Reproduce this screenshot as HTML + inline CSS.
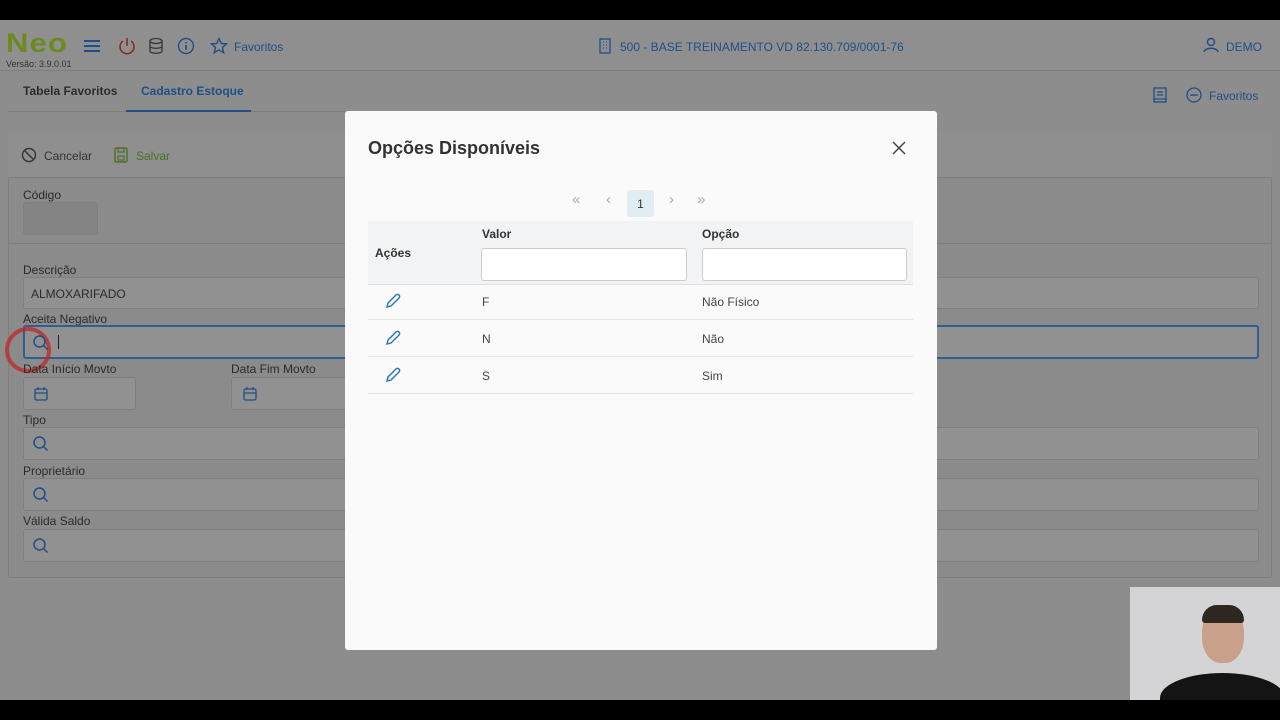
<!DOCTYPE html>
<html><head><meta charset="utf-8"><style>
*{box-sizing:border-box;margin:0;padding:0}
body{width:1280px;height:720px;overflow:hidden;background:#8d8d8d;font-family:"Liberation Sans",sans-serif;position:relative}
.a{position:absolute}
.lbl{font-size:12px;color:#2a2a2a}
.inp{position:absolute;background:#919191;border:1px solid #7f7f7f;border-radius:3px}
.blue{color:#1f4f86}
.modal{position:absolute;left:345px;top:111px;width:592px;height:539px;background:#fafafa;border-radius:3px}
.m{position:absolute}
.row{position:absolute;left:23px;width:545px;height:37px;border-bottom:1px solid #e4e4e4;font-size:12px;color:#444}
.pg{position:absolute;top:80px;font-size:15px;color:#aaa}
</style></head><body>
<div class="a" style="left:0;top:0;width:1280px;height:20px;background:#000"></div>
<div class="a" style="left:0;top:700px;width:1280px;height:20px;background:#000"></div>
<!-- header -->
<div class="a" style="left:0;top:20px;width:1280px;height:51px;background:#8f8f8f;border-bottom:1px solid #7e7e7e"></div>
<div class="a" style="left:6px;top:28px;font-size:27px;font-weight:bold;color:#6d8a1f;letter-spacing:1px;transform:scaleX(1.15);transform-origin:left">Neo</div>
<div class="a" style="left:6px;top:59px;font-size:9px;color:#333">Versão: 3.9.0.01</div>
<svg class="a" style="left:83px;top:38px" width="18" height="16"><path d="M1 3h16M1 8h16M1 13h16" stroke="#1f4f86" stroke-width="2"/></svg>
<svg class="a" style="left:118px;top:37px" width="18" height="18"><path d="M5 4a7 7 0 1 0 8 0M9 1v8" stroke="#8a2a2a" stroke-width="1.6" fill="none"/></svg>
<svg class="a" style="left:148px;top:37px" width="16" height="18"><ellipse cx="8" cy="4" rx="6" ry="2.5" stroke="#333" fill="none" stroke-width="1.3"/><path d="M2 4v10c0 3 12 3 12 0V4M2 9c0 3 12 3 12 0" stroke="#333" fill="none" stroke-width="1.3"/></svg>
<svg class="a" style="left:177px;top:37px" width="18" height="18"><circle cx="9" cy="9" r="7.5" stroke="#1f4f86" fill="none" stroke-width="1.4"/><path d="M9 8v5M9 5v1.5" stroke="#1f4f86" stroke-width="1.6"/></svg>
<svg class="a" style="left:210px;top:37px" width="18" height="18"><path d="M9 1.5l2.2 5 5.3.4-4 3.5 1.2 5.3L9 12.9l-4.7 2.8 1.2-5.3-4-3.5 5.3-.4z" stroke="#1f4f86" fill="none" stroke-width="1.4"/></svg>
<div class="a blue" style="left:234px;top:40px;font-size:12px">Favoritos</div>
<svg class="a" style="left:598px;top:38px" width="14" height="16"><rect x="2" y="1" width="10" height="14" stroke="#1f4f86" fill="none" stroke-width="1.3"/><path d="M5 4h1M8 4h1M5 7h1M8 7h1M5 10h1M8 10h1" stroke="#1f4f86" stroke-width="1.3"/></svg>
<div class="a blue" style="left:620px;top:40px;font-size:12px">500 - BASE TREINAMENTO VD 82.130.709/0001-76</div>
<svg class="a" style="left:1203px;top:37px" width="16" height="16"><circle cx="8" cy="5" r="3.5" stroke="#1f4f86" fill="none" stroke-width="1.4"/><path d="M1 15c1-5 13-5 14 0" stroke="#1f4f86" fill="none" stroke-width="1.4"/></svg>
<div class="a blue" style="left:1226px;top:40px;font-size:12px">DEMO</div>
<!-- tabs -->
<div class="a" style="left:23px;top:84px;font-size:12px;font-weight:bold;color:#2c2c2c">Tabela Favoritos</div>
<div class="a blue" style="left:141px;top:84px;font-size:12px;font-weight:bold">Cadastro Estoque</div>
<div class="a" style="left:8px;top:111px;width:337px;height:1px;background:#7d7d7d"></div>
<div class="a" style="left:126px;top:110px;width:125px;height:2px;background:#1f4f86"></div>
<svg class="a" style="left:1153px;top:87px" width="14" height="16"><rect x="1" y="1" width="12" height="14" stroke="#1f4f86" fill="none" stroke-width="1.3"/><path d="M4 5h6M4 8h6M1 12h12" stroke="#1f4f86" stroke-width="1.3"/></svg>
<svg class="a" style="left:1186px;top:87px" width="16" height="16"><circle cx="8" cy="8" r="7" stroke="#1f4f86" fill="none" stroke-width="1.3"/><path d="M4 8h8" stroke="#1f4f86" stroke-width="1.4"/></svg>
<div class="a blue" style="left:1209px;top:89px;font-size:12px">Favoritos</div>
<!-- main panel -->
<div class="a" style="left:8px;top:133px;width:1264px;height:445px;background:#8b8b8b;border:1px solid #7e7e7e;border-radius:3px"></div>
<div class="a" style="left:8px;top:133px;width:1264px;height:45px;background:#8f8f8f;border-bottom:1px solid #7e7e7e"></div>
<div class="a" style="left:8px;top:243px;width:1264px;height:1px;background:#7e7e7e"></div>
<svg class="a" style="left:21px;top:147px" width="16" height="16"><circle cx="8" cy="8" r="6.5" stroke="#333" fill="none" stroke-width="1.4"/><path d="M3.5 3.5l9 9" stroke="#333" stroke-width="1.4"/></svg>
<div class="a" style="left:44px;top:149px;font-size:12px;color:#333">Cancelar</div>
<svg class="a" style="left:114px;top:147px" width="14" height="16"><rect x="1" y="1" width="12" height="14" rx="1.5" stroke="#4e6e25" fill="none" stroke-width="1.4"/><rect x="4" y="1" width="6" height="4" stroke="#4e6e25" fill="none" stroke-width="1.2"/><rect x="4" y="9" width="6" height="4" stroke="#4e6e25" fill="none" stroke-width="1.2"/></svg>
<div class="a" style="left:136px;top:149px;font-size:12px;color:#4e6e25">Salvar</div>
<div class="a lbl" style="left:23px;top:188px">Código</div>
<div class="inp" style="left:23px;top:202px;width:75px;height:33px;background:#848484"></div>
<div class="a lbl" style="left:23px;top:263px">Descrição</div>
<div class="inp" style="left:23px;top:277px;width:1236px;height:32px"></div>
<div class="a" style="left:31px;top:287px;font-size:12px;color:#2a2a2a">ALMOXARIFADO</div>
<div class="a lbl" style="left:23px;top:312px">Aceita Negativo</div>
<div class="inp" style="left:23px;top:325px;width:1236px;height:34px;border:2px solid #2f5d94"></div>
<div class="a" style="left:58px;top:335px;width:1px;height:14px;background:#222"></div>
<div class="a" style="left:5px;top:327px;width:46px;height:46px;border-radius:50%;border:4px solid rgba(190,40,40,.75)"></div>
<div class="a lbl" style="left:23px;top:362px">Data Início Movto</div>
<div class="inp" style="left:23px;top:377px;width:113px;height:33px"></div>
<div class="a lbl" style="left:231px;top:362px">Data Fim Movto</div>
<div class="inp" style="left:231px;top:377px;width:120px;height:33px"></div>
<div class="a lbl" style="left:23px;top:413px">Tipo</div>
<div class="inp" style="left:23px;top:427px;width:1236px;height:33px"></div>
<div class="a lbl" style="left:23px;top:464px">Proprietário</div>
<div class="inp" style="left:23px;top:478px;width:1236px;height:33px"></div>
<div class="a lbl" style="left:23px;top:514px">Válida Saldo</div>
<div class="inp" style="left:23px;top:529px;width:1236px;height:33px"></div>
<svg class="a" style="left:32px;top:334px" width="18" height="18"><circle cx="7.5" cy="7.5" r="5.5" stroke="#1f4f86" fill="none" stroke-width="1.5"/><path d="M11.5 11.5l4 4" stroke="#1f4f86" stroke-width="1.5"/></svg>
<svg class="a" style="left:32px;top:435px" width="18" height="18"><circle cx="7.5" cy="7.5" r="5.5" stroke="#1f4f86" fill="none" stroke-width="1.5"/><path d="M11.5 11.5l4 4" stroke="#1f4f86" stroke-width="1.5"/></svg>
<svg class="a" style="left:32px;top:486px" width="18" height="18"><circle cx="7.5" cy="7.5" r="5.5" stroke="#1f4f86" fill="none" stroke-width="1.5"/><path d="M11.5 11.5l4 4" stroke="#1f4f86" stroke-width="1.5"/></svg>
<svg class="a" style="left:32px;top:537px" width="18" height="18"><circle cx="7.5" cy="7.5" r="5.5" stroke="#1f4f86" fill="none" stroke-width="1.5"/><path d="M11.5 11.5l4 4" stroke="#1f4f86" stroke-width="1.5"/></svg>
<svg class="a" style="left:34px;top:386px" width="14" height="15"><rect x="1" y="3" width="12" height="11" rx="1.5" stroke="#1f4f86" fill="none" stroke-width="1.3"/><path d="M1 7h12M4 1v3M10 1v3" stroke="#1f4f86" stroke-width="1.3"/></svg>
<svg class="a" style="left:243px;top:386px" width="14" height="15"><rect x="1" y="3" width="12" height="11" rx="1.5" stroke="#1f4f86" fill="none" stroke-width="1.3"/><path d="M1 7h12M4 1v3M10 1v3" stroke="#1f4f86" stroke-width="1.3"/></svg>
<!-- webcam -->
<div class="a" style="left:1130px;top:587px;width:150px;height:113px;background:#d4d4d6;overflow:hidden">
<div class="a" style="left:72px;top:20px;width:42px;height:56px;border-radius:45%;background:#c9a08a"></div>
<div class="a" style="left:72px;top:18px;width:42px;height:18px;border-radius:20px 20px 4px 4px;background:#2e2621"></div>
<div class="a" style="left:30px;top:86px;width:125px;height:50px;border-radius:50% 50% 0 0;background:#141414"></div>
</div>
<!-- modal -->
<div class="modal">
<div class="m" style="left:23px;top:27px;font-size:18px;font-weight:bold;color:#333">Opções Disponíveis</div>
<svg class="m" style="left:547px;top:30px" width="14" height="14"><path d="M1 1l12 12M13 1L1 13" stroke="#444" stroke-width="1.5"/></svg>
<div class="pg" style="left:227px">«</div>
<div class="pg" style="left:261px">‹</div>
<div class="m" style="left:282px;top:79px;width:27px;height:27px;background:#e2ecf3;border-radius:3px;font-size:12px;color:#333;text-align:center;line-height:29px">1</div>
<div class="pg" style="left:324px">›</div>
<div class="pg" style="left:352px">»</div>
<div class="m" style="left:23px;top:110px;width:545px;height:64px;background:#f2f3f4;border-bottom:1px solid #e0e0e0"></div>
<div class="m" style="left:30px;top:135px;font-size:12px;font-weight:bold;color:#333">Ações</div>
<div class="m" style="left:137px;top:116px;font-size:12px;font-weight:bold;color:#333">Valor</div>
<div class="m" style="left:357px;top:116px;font-size:12px;font-weight:bold;color:#333">Opção</div>
<div class="m" style="left:136px;top:137px;width:206px;height:33px;background:#fff;border:1px solid #ccc;border-radius:3px"></div>
<div class="m" style="left:357px;top:137px;width:205px;height:33px;background:#fff;border:1px solid #ccc;border-radius:3px"></div>
<div class="row" style="top:172px"><span class="m" style="left:114px;top:12px">F</span><span class="m" style="left:334px;top:12px">Não Físico</span></div>
<div class="row" style="top:209px"><span class="m" style="left:114px;top:12px">N</span><span class="m" style="left:334px;top:12px">Não</span></div>
<div class="row" style="top:246px"><span class="m" style="left:114px;top:12px">S</span><span class="m" style="left:334px;top:12px">Sim</span></div>
<svg class="m" style="left:39px;top:181px" width="18" height="18"><path d="M3 15l1-4 8-8a2 2 0 0 1 3 3l-8 8z" stroke="#2f7ab8" fill="none" stroke-width="1.5"/></svg>
<svg class="m" style="left:39px;top:218px" width="18" height="18"><path d="M3 15l1-4 8-8a2 2 0 0 1 3 3l-8 8z" stroke="#2f7ab8" fill="none" stroke-width="1.5"/></svg>
<svg class="m" style="left:39px;top:255px" width="18" height="18"><path d="M3 15l1-4 8-8a2 2 0 0 1 3 3l-8 8z" stroke="#2f7ab8" fill="none" stroke-width="1.5"/></svg>
</div>
</body></html>
